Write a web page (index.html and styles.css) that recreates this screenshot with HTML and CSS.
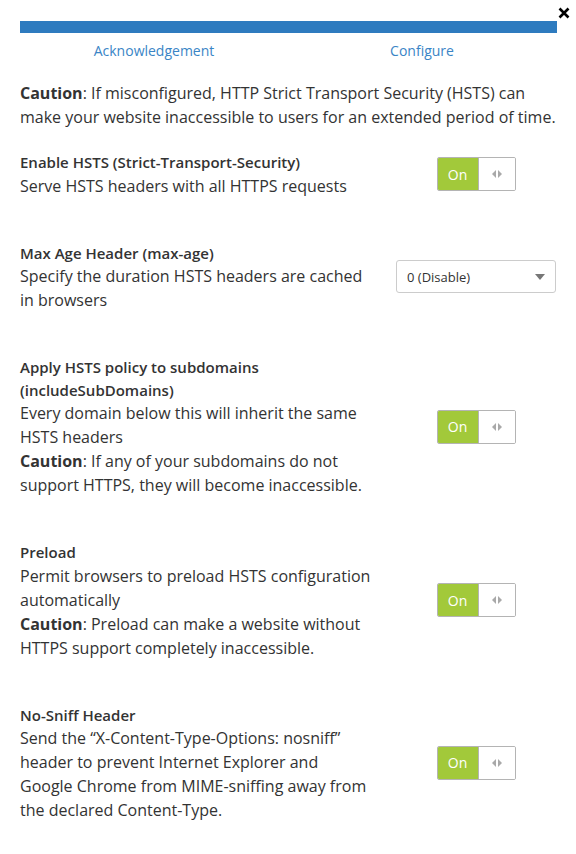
FILE: index.html
```html
<!DOCTYPE html>
<html>
<head>
<meta charset="utf-8">
<link rel="stylesheet" href="styles.css">
</head>
<body>
<div class="dialog">
  <button class="close" aria-label="Close">
    <svg width="12" height="12" viewBox="0 0 12 12"><path d="M1.5 1.5 L10.5 10.5 M10.5 1.5 L1.5 10.5" stroke="#000" stroke-width="2.6" stroke-linecap="butt"/></svg>
  </button>
  <div class="progress"></div>
  <div class="tabs">
    <a class="tab">Acknowledgement</a>
    <a class="tab">Configure</a>
  </div>
  <p class="intro"><b>Caution</b>: If misconfigured, HTTP Strict Transport Security (HSTS) can make your website inaccessible to users for an extended period of time.</p>

  <div class="row">
    <div class="text">
      <div class="title">Enable HSTS (Strict-Transport-Security)</div>
      <div class="desc">Serve HSTS headers with all HTTPS requests</div>
    </div>
    <div class="ctrl">
      <div class="toggle"><span class="on">On</span><span class="knob"><svg width="10" height="8" viewBox="0 0 10 8"><path d="M4 0 L0 4 L4 8 Z M6 0 L10 4 L6 8 Z" fill="#a9a9a9"/></svg></span></div>
    </div>
  </div>

  <div class="row">
    <div class="text">
      <div class="title">Max Age Header (max-age)</div>
      <div class="desc">Specify the duration HSTS headers are cached in browsers</div>
    </div>
    <div class="ctrl">
      <div class="select"><span>0 (Disable)</span><svg width="10" height="6" viewBox="0 0 10 6"><path d="M0 0 L10 0 L5 6 Z" fill="#777"/></svg></div>
    </div>
  </div>

  <div class="row">
    <div class="text">
      <div class="title">Apply HSTS policy to subdomains (includeSubDomains)</div>
      <div class="desc">Every domain below this will inherit the same HSTS headers<br><b>Caution</b>: If any of your subdomains do not support HTTPS, they will become inaccessible.</div>
    </div>
    <div class="ctrl">
      <div class="toggle"><span class="on">On</span><span class="knob"><svg width="10" height="8" viewBox="0 0 10 8"><path d="M4 0 L0 4 L4 8 Z M6 0 L10 4 L6 8 Z" fill="#a9a9a9"/></svg></span></div>
    </div>
  </div>

  <div class="row">
    <div class="text">
      <div class="title">Preload</div>
      <div class="desc">Permit browsers to preload HSTS configuration automatically<br><b>Caution</b>: Preload can make a website without HTTPS support completely inaccessible.</div>
    </div>
    <div class="ctrl">
      <div class="toggle"><span class="on">On</span><span class="knob"><svg width="10" height="8" viewBox="0 0 10 8"><path d="M4 0 L0 4 L4 8 Z M6 0 L10 4 L6 8 Z" fill="#a9a9a9"/></svg></span></div>
    </div>
  </div>

  <div class="row">
    <div class="text">
      <div class="title">No-Sniff Header</div>
      <div class="desc">Send the “X-Content-Type-Options: nosniff” header to prevent Internet Explorer and Google Chrome from MIME-sniffing away from the declared Content-Type.</div>
    </div>
    <div class="ctrl">
      <div class="toggle"><span class="on">On</span><span class="knob"><svg width="10" height="8" viewBox="0 0 10 8"><path d="M4 0 L0 4 L4 8 Z M6 0 L10 4 L6 8 Z" fill="#a9a9a9"/></svg></span></div>
    </div>
  </div>
</div>
</body>
</html>
```

FILE: styles.css
```css
html, body {
  margin: 0;
  padding: 0;
  background: #fff;
}
body {
  font-family: "Open Sans", "DejaVu Sans", sans-serif;
  color: #333;
}
.dialog {
  position: relative;
  padding: 21px 20px 20px 20px;
}
.close {
  position: absolute;
  top: 6px;
  right: 5px;
  width: 14px;
  height: 14px;
  padding: 0;
  border: 0;
  background: none;
  display: flex;
  align-items: center;
  justify-content: center;
}
.progress {
  height: 12px;
  margin-right: -1px;
  background: #2e7bbf;
}
.tabs {
  display: grid;
  grid-template-columns: 1fr 1fr;
  margin-top: 9px;
}
.tab {
  text-align: center;
  font-size: 14px;
  line-height: 18px;
  color: #3a85c6;
}
.intro {
  margin: 21px 0 0;
  font-size: 16px;
  line-height: 24px;
}
.intro b, .desc b {
  font-weight: 700;
}
.row {
  display: grid;
  grid-template-columns: 1fr 160px;
  align-items: center;
  margin-top: 22px;
}
.row + .row {
  margin-top: 44px;
}
.title {
  font-size: 15px;
  font-weight: 600;
  line-height: 22.5px;
}
.desc {
  font-size: 16px;
  line-height: 24px;
}
.text {
  padding-right: 24px;
}
.ctrl {
  display: flex;
  justify-content: center;
}
.toggle {
  display: flex;
  width: 79px;
  height: 34px;
  box-sizing: border-box;
  border: 1px solid #b4b4b4;
  border-radius: 2px;
  overflow: hidden;
}
.on {
  width: 40px;
  background: #a2c93a;
  color: #fff;
  font-size: 14px;
  display: flex;
  align-items: center;
  justify-content: center;
}
.knob {
  flex: 1;
  background: #fff;
  border-left: 1px solid #b4b4b4;
  display: flex;
  align-items: center;
  justify-content: center;
}
.select {
  width: 160px;
  height: 33px;
  box-sizing: border-box;
  border: 1px solid #ccc;
  border-radius: 3px;
  display: flex;
  align-items: center;
  justify-content: space-between;
  padding: 0 10px 0 10px;
  font-size: 13px;
  color: #333;
}
```
